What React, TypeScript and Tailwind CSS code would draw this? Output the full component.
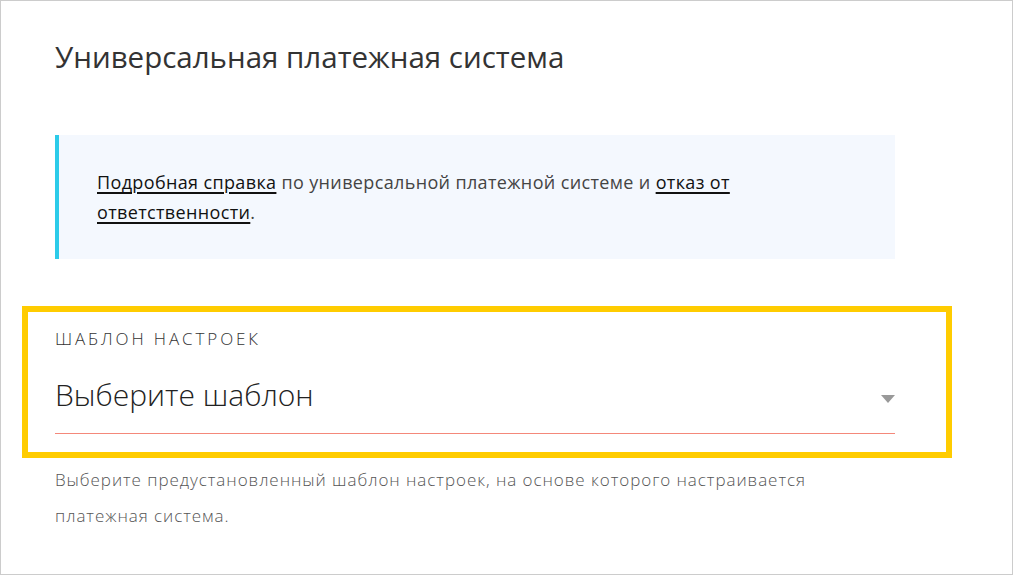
export default function App() {
  return (
    <div className="w-[1013px] h-[575px] border border-[#cccccc] bg-white overflow-hidden font-['Open_Sans','Noto_Sans',sans-serif]">
      <div className="px-[21px]">
        {/* Title */}
        <h1 className="mx-[33px] pt-[36px] text-[29.5px] leading-[40px] font-normal text-[#333333]">
          Универсальная платежная система
        </h1>

        {/* Info block */}
        <div className="mx-[33px] mt-[58px] w-[840px] border-l-4 border-[#2ccbe9] bg-[#f4f8fe] pl-[38px] pr-[38px] py-[32px] text-[18px] leading-[30px] tracking-[0.02em] text-[#444444]">
          <a href="#" className="text-[#111111] underline decoration-[1.5px] underline-offset-[3px]">
            Подробная справка
          </a>{' '}
          по универсальной платежной системе и{' '}
          <a href="#" className="text-[#111111] underline decoration-[1.5px] underline-offset-[3px]">
            отказ от
            <br />
            ответственности
          </a>
          .
        </div>

        {/* Highlighted field */}
        <div className="mt-[47px] w-[930px] border-[6px] border-[#ffcc00] pl-[27px] pr-[51px] pt-[17px] pb-[18px]">
          <div className="text-[17px] leading-[20px] tracking-[0.17em] font-light text-[#333333]">
            ШАБЛОН НАСТРОЕК
          </div>
          <div className="mt-[28px] flex items-start justify-between pb-[20px]">
            <span className="text-[30px] leading-[36px] font-light text-[#222222]">Выберите шаблон</span>
            <span className="mt-[18px] h-0 w-0 border-l-[7px] border-r-[7px] border-t-[8px] border-l-transparent border-r-transparent border-t-[#999999]" />
          </div>
          <div className="h-[1px] bg-[#f4887a]" />
        </div>

        {/* Help text */}
        <p className="mx-[33px] mt-[4px] w-[840px] text-[17px] leading-[36px] tracking-[0.056em] font-light text-[#555555]">
          Выберите предустановленный шаблон настроек, на основе которого настраивается
          <br />
          платежная система.
        </p>
      </div>
    </div>
  );
}
